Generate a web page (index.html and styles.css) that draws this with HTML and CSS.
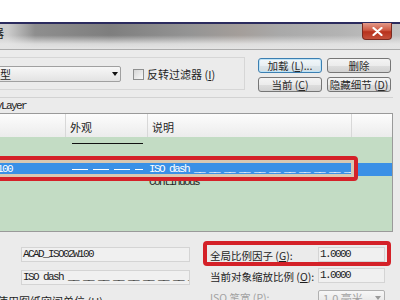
FILE: index.html
```html
<!DOCTYPE html>
<html lang="zh">
<head>
<meta charset="utf-8">
<title>线型管理器</title>
<link rel="stylesheet" href="styles.css">
</head>
<body>
<div class="desk"></div>
<div class="window">
  <div class="titlebar">
    <span class="title">线型管理器</span>
    <span class="close"><svg width="11" height="9" viewBox="0 0 11 9"><path d="M1.5 1 L9.5 8 M9.5 1 L1.5 8" stroke="#fff" stroke-width="2.2" stroke-linecap="round"/></svg></span>
  </div>
  <div class="client">
    <div class="toprow">
      <div class="filter">
        <div class="select"><span>显示所有线型</span><span class="arrow"></span></div>
        <div class="check"><span class="box"></span><span>反转过滤器 (<u>I</u>)</span></div>
      </div>
      <div class="buttons">
        <button class="btn default">加载 (<u>L</u>)...</button>
        <button class="btn">删除</button>
        <button class="btn">当前 (<u>C</u>)</button>
        <button class="btn">隐藏细节 (<u>D</u>)</button>
      </div>
    </div>
    <div class="current">当前线型: <span class="mono">ByLayer</span></div>
    <div class="list">
      <div class="row head">
        <div class="c1">线型</div>
        <div class="c2">外观</div>
        <div class="c3">说明</div>
        <div class="c4"></div>
      </div>
      <div class="rows">
        <div class="row"><div class="c1 mono">ByLayer</div><div class="c2"><span class="sample solid"></span></div><div class="c3"></div><div class="c4"></div></div>
        <div class="row"><div class="c1 mono">ByBlock</div><div class="c2"></div><div class="c3"></div><div class="c4"></div></div>
        <div class="row sel"><div class="c1 mono">ACAD_ISO02W100</div><div class="c2"><span class="sample dashed"></span></div><div class="c3 mono">ISO dash __ __ __ __ __ __ __ __ __ __ __ __ __ __</div><div class="c4"></div></div>
        <div class="row"><div class="c1 mono">Continuous</div><div class="c2"></div><div class="c3 mono dark">Continuous</div><div class="c4"></div></div>
      </div>
      <div class="mark mark-row"></div>
    </div>
    <div class="details">
      <div class="dleft">
        <div class="drow"><span class="dlabel">名称 (<u>N</u>):</span><span class="field mono">ACAD_ISO02W100</span></div>
        <div class="drow"><span class="dlabel">说明 (<u>E</u>):</span><span class="field mono">ISO dash __ __ __ __ __ __ __ __ __ __ __ -</span></div>
        <div class="drow uses"><span class="box"></span><span>使用图纸空间单位 (<u>U</u>)</span></div>
      </div>
      <div class="dright">
        <div class="drow marked"><span class="rlabel">全局比例因子 (<u>G</u>):</span><span class="field small mono">1.0000</span><span class="mark mark-field"></span></div>
        <div class="drow"><span class="rlabel">当前对象缩放比例 (<u>O</u>):</span><span class="field small mono">1.0000</span></div>
        <div class="drow"><span class="rlabel grey">ISO 笔宽 (<u>P</u>):</span><span class="combo"><span>1.0 毫米</span><span class="arrow"></span></span></div>
      </div>
    </div>
  </div>
</div>
</body>
</html>
```

FILE: styles.css
```css
* { box-sizing: border-box; }
html, body { margin: 0; padding: 0; }
body {
  width: 400px;
  height: 300px;
  overflow: hidden;
  background: #ffffff;
  font-family: "Noto Sans CJK SC", "Liberation Sans", sans-serif;
  font-size: 11px;
  color: #1e1e1e;
}
u { text-decoration: underline; text-underline-offset: 1px; }

.desk { height: 22px; background: #ffffff; }

.window {
  width: 500px;
  height: 278px;
  margin-left: -100px;
  border-top: 2px solid #2b2b5e;
  background: #ebebeb;
}

.titlebar {
  height: 26px;
  display: flex;
  justify-content: space-between;
  align-items: flex-start;
  padding-right: 8px;
  border-bottom: 1px solid #ababab;
  background:
    linear-gradient(to bottom, rgba(236,236,236,0) 45%, rgba(232,232,232,0.85) 80%, #e4e4e4 100%),
    linear-gradient(to right, #d2d2d2 0px, #cccccc 108px, #8e8e8e 135px, #7e7e7e 210px, #949494 290px, #a49e9a 340px, #a9a9a9 380px, #b3b3b3 440px, #c2c2c2 500px);
}
.title {
  padding-left: 44px;
  margin-top: 3px;
  font-size: 12px;
  line-height: 12px;
  color: #202020;
}
.close {
  width: 30px;
  height: 17px;
  margin-top: -1px;
  display: flex;
  align-items: center;
  justify-content: center;
  border: 1px solid #7a2a20;
  border-top: none;
  border-radius: 0 0 4px 4px;
  background: linear-gradient(#e39a8a 0%, #cf5a44 45%, #b8311c 55%, #c4513b 100%);
}

.client { padding: 7px 7px 0 20px; }

.toprow { display: flex; gap: 13px; align-items: flex-start; height: 35px; }
.filter {
  width: 325px;
  height: 33px;
  border: 1px solid #d6d6d6;
  padding: 8px 0 0 12px;
  display: flex;
  align-items: flex-start;
  gap: 12px;
}
.select {
  width: 188px;
  height: 16px;
  border: 1px solid #a0a0a0;
  border-radius: 2px;
  background: linear-gradient(#f7f7f7, #e3e3e3);
  display: flex;
  align-items: center;
  justify-content: space-between;
  padding: 0 2px 0 11px;
  line-height: 14px;
}
.arrow {
  width: 0;
  height: 0;
  border-left: 3.5px solid transparent;
  border-right: 3.5px solid transparent;
  border-top: 4px solid #111;
}
.check { height: 16px; display: flex; align-items: center; gap: 3px; line-height: 14px; }
.box {
  width: 11px;
  height: 11px;
  flex: none;
  border: 1px solid #8e8f8f;
  background: linear-gradient(135deg, #d6d6d6, #f8f8f8);
}

.buttons {
  display: grid;
  grid-template-columns: 64px 64px;
  grid-auto-rows: 15px;
  gap: 4px 5px;
  margin-top: 1px;
}
.btn {
  font: inherit;
  font-size: 10.5px;
  line-height: 12px;
  padding: 0;
  border: 1px solid #767676;
  border-radius: 3px;
  color: #2a2a2a;
  white-space: nowrap;
  background: linear-gradient(#f4f4f4 0%, #ececec 50%, #dedede 51%, #d2d2d2 100%);
}
.btn.default {
  border-color: #3c7fb1;
  box-shadow: inset 0 0 0 1px #bfe3f6;
  background: linear-gradient(#f2f8fb 0%, #e8eff3 50%, #dbe5ea 51%, #d3dde2 100%);
}

.current {
  margin-top: 5px;
  border-top: 1px solid #d2d2d2;
  height: 16px;
  padding-left: 26px;
  font-size: 10px;
  line-height: 14px;
  color: #222;
}

.mono {
  font-family: "Liberation Mono", "DejaVu Sans Mono", monospace;
  font-size: 11px;
  letter-spacing: -1.6px;
  white-space: pre;
}

.list {
  position: relative;
  border: 1px solid #9a9a9a;
  background: #c3dcc4;
}
.row { display: flex; }
.c1 { width: 145px; flex: none; overflow: hidden; }
.c2 { width: 82px; flex: none; }
.c3 { width: 204px; flex: none; overflow: hidden; }
.c4 { flex: 1; }

.head {
  height: 23px;
  background: linear-gradient(#fdfdfd, #f4f4f4 50%, #ececec);
}
.head > div {
  height: 100%;
  display: flex;
  align-items: center;
  padding: 3px 0 0 4px;
  color: #1e1e1e;
}
.head .c1, .head .c2, .head .c3 { border-right: 1px solid #d8d8d8; }

.rows { height: 94px; }
.rows .row { height: 13px; align-items: center; line-height: 13px; }
.rows .c1 { padding-left: 21px; color: #1e1e1e; }
.rows .c3 { padding-left: 1px; }
.sample { display: block; height: 1px; margin: 0 5px 0 6px; }
.solid { background: #111; }
.dashed { background: repeating-linear-gradient(to right, #ffffff 0 16px, transparent 16px 21px); }
.sel { background: #3a90e6; color: #ffffff; }
.sel .c1 { color: #ffffff; }
.sel .c4 { background: #c3dcc4; }
.dark { color: #1e1e1e; }

.mark {
  position: absolute;
  border: 4px solid #d42128;
  border-radius: 4px;
  pointer-events: none;
}
.mark-row {
  top: 42px;
  left: 59px;
  width: 378px;
  height: 25px;
  box-shadow: inset 0 0 0 3px #d9c8b2;
}

.details { display: flex; padding-top: 15px; }
.dleft { width: 270px; display: flex; flex-direction: column; gap: 8px; }
.dright { margin-left: 20px; display: flex; flex-direction: column; gap: 6px; }
.drow { display: flex; align-items: center; height: 15px; white-space: nowrap; }
.dlabel { width: 101px; flex: none; }
.rlabel { width: 108px; flex: none; padding-top: 2px; font-size: 10.5px; white-space: nowrap; overflow: visible; }
.grey { color: #a2a2a2; }
.field {
  width: 169px;
  height: 15px;
  border: 1px solid #d4d4d4;
  background: #f0f0f0;
  padding-left: 1px;
  line-height: 13px;
  overflow: hidden;
  color: #1e1e1e;
  flex: none;
}
.field.small { width: 67px; }
.uses { padding-left: 62px; gap: 4px; }
.marked { position: relative; }
.mark-field { left: -7px; top: -6px; width: 188px; height: 25px; }
.combo {
  width: 67px;
  height: 16px;
  margin-top: 2px;
  flex: none;
  border: 1px solid #b0b0b0;
  border-radius: 2px;
  background: linear-gradient(#f7f7f7, #e3e3e3);
  display: flex;
  align-items: center;
  justify-content: space-between;
  padding: 0 3px 0 4px;
  color: #a2a2a2;
  line-height: 14px;
}
.combo .arrow { border-top-color: #9a9a9a; }
```
